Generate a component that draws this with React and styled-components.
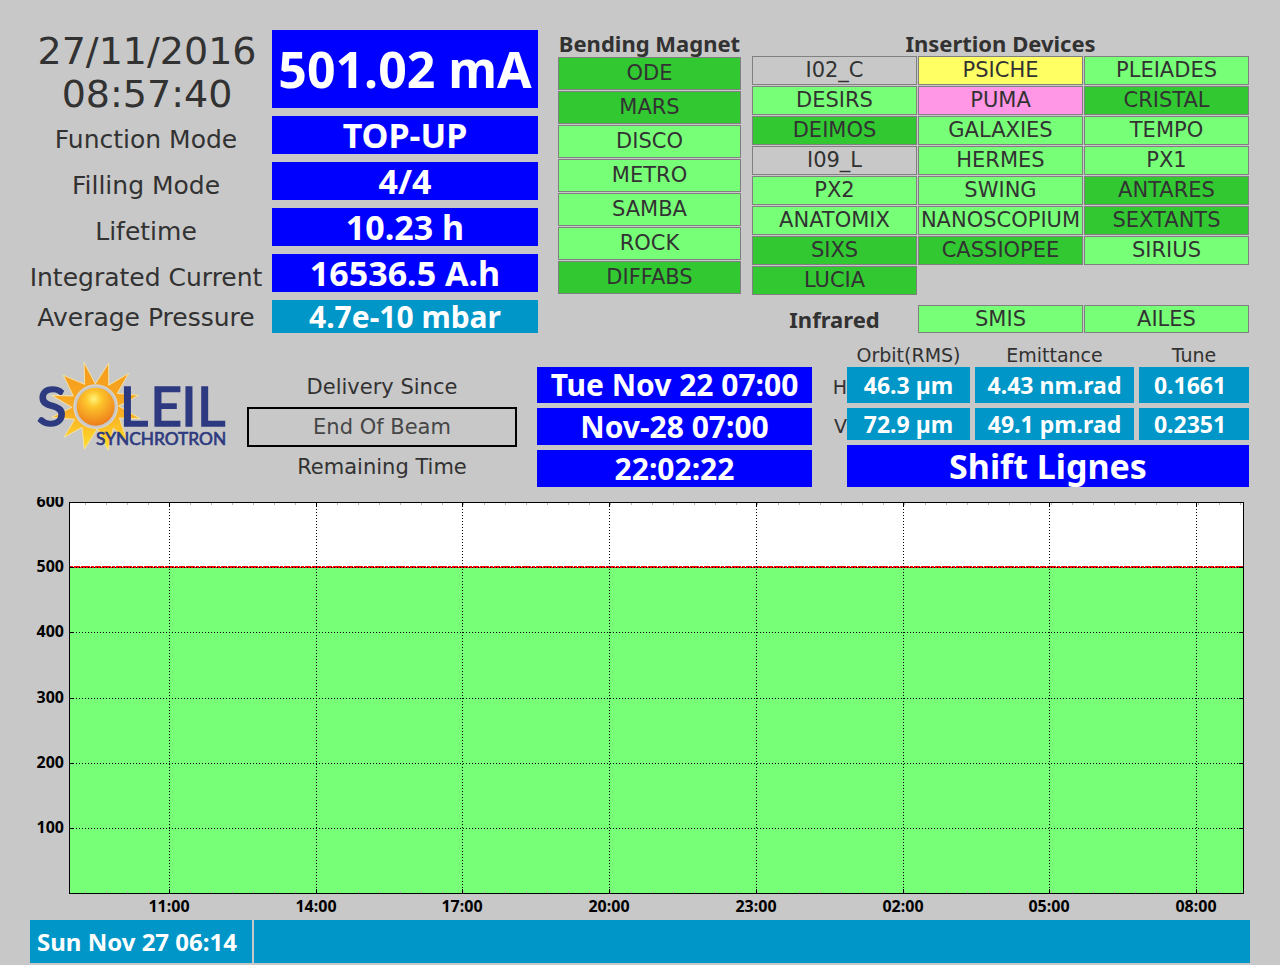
import styled, { createGlobalStyle } from 'styled-components'

const GlobalStyle = createGlobalStyle`
  * {
    box-sizing: border-box;
  }

  body {
    margin: 0;
    background: #c8c8c8;
    color: #323232;
    font-family: 'DejaVu Sans', sans-serif;
  }
`

const boldFont = "'Noto Sans', sans-serif"

const fills = {
  off: '#c8c8c8',
  open: '#78ff78',
  beam: '#32c832',
  warning: '#ffff64',
  fault: '#ff96e6',
}

const bendingMagnets = [
  ['ODE', 'beam'],
  ['MARS', 'beam'],
  ['DISCO', 'open'],
  ['METRO', 'open'],
  ['SAMBA', 'open'],
  ['ROCK', 'open'],
  ['DIFFABS', 'beam'],
]

const insertionDevices = [
  ['I02_C', 'off'],
  ['PSICHE', 'warning'],
  ['PLEIADES', 'open'],
  ['DESIRS', 'open'],
  ['PUMA', 'fault'],
  ['CRISTAL', 'beam'],
  ['DEIMOS', 'beam'],
  ['GALAXIES', 'open'],
  ['TEMPO', 'open'],
  ['I09_L', 'off'],
  ['HERMES', 'open'],
  ['PX1', 'open'],
  ['PX2', 'open'],
  ['SWING', 'open'],
  ['ANTARES', 'beam'],
  ['ANATOMIX', 'open'],
  ['NANOSCOPIUM', 'open'],
  ['SEXTANTS', 'beam'],
  ['SIXS', 'beam'],
  ['CASSIOPEE', 'beam'],
  ['SIRIUS', 'open'],
  ['LUCIA', 'beam'],
]

const Page = styled.main`
  padding: 30px 30px 2px;
`

const TopSection = styled.section`
  display: grid;
  grid-template-columns: 508fr 20px 183fr 11px 497fr;
  padding-right: 1px;
`

const Machine = styled.div`
  display: grid;
  grid-template-columns: minmax(0, 242fr) minmax(0, 266fr);
  grid-template-rows: 78px repeat(4, 38px) 33px;
  row-gap: 8px;
`

const Clock = styled.time`
  height: 78px;
  padding-right: 8px;
  font-size: 38px;
  line-height: 43px;
  text-align: center;
`

const MachineLabel = styled.div`
  display: flex;
  align-items: center;
  justify-content: center;
  padding: ${(p) => (p.$low ? '10px 10px 0 0' : '2px 10px 0 0')};
  font-size: 25px;
  line-height: 28px;
  white-space: nowrap;
`

const Value = styled.div`
  display: flex;
  align-items: center;
  justify-content: center;
  background: ${(p) => (p.$secondary ? '#0096c8' : '#0000ff')};
  color: #fff;
  font-family: ${boldFont};
  font-size: ${(p) => p.$size || 34}px;
  font-weight: 700;
  line-height: 1;
  white-space: nowrap;
`

const Group = styled.div`
  display: flex;
  flex-direction: column;
`

const GroupTitle = styled.h2`
  margin: 0;
  font-family: ${boldFont};
  font-size: 22px;
  font-weight: 700;
  line-height: ${(p) => p.$height}px;
  text-align: center;
  white-space: nowrap;
`

const Beamlines = styled.div`
  display: grid;
  grid-template-columns: repeat(${(p) => p.$columns}, 1fr);
  grid-auto-rows: ${(p) => p.$row}px;
  gap: 1px;
`

const Beamline = styled.div`
  display: flex;
  align-items: center;
  justify-content: center;
  min-width: 0;
  border: 1px solid #808080;
  background: ${(p) => fills[p.$state]};
  font-size: 21px;
  line-height: 1;
`

const Infrared = styled(Beamlines)`
  margin-top: 10px;
`

const MiddleSection = styled.section`
  display: grid;
  grid-template-columns: 217fr 270fr 20px 275fr 16px 421fr;
  margin-top: 12px;
  padding-right: 1px;
`

const Logo = styled.svg`
  display: block;
  width: 100%;
  margin-top: 5px;
`

const BeamLabels = styled.div`
  display: grid;
  grid-template-rows: 40px 40px 40px;
  padding-top: 22px;
`

const BeamLabel = styled.div`
  font-size: 21px;
  line-height: 40px;
  text-align: center;
`

const BeamButton = styled.button`
  border: 2px solid #000;
  background: transparent;
  color: #464646;
  font-family: inherit;
  font-size: 21px;
`

const BeamValues = styled.div`
  display: grid;
  grid-template-rows: 36px 37px 37px;
  row-gap: 5px;
  padding-top: 22px;
`

const Orbit = styled.div`
  display: grid;
  grid-template-rows: auto 42px;
  row-gap: 5px;
`

const OrbitTable = styled.table`
  display: block;

  thead {
    display: block;
  }

  tbody {
    display: grid;
    row-gap: 5px;
  }
`

const OrbitRow = styled.tr`
  display: grid;
  grid-template-columns: 14px 123fr 159fr 110fr;
  column-gap: 5px;
  height: ${(p) => p.$height}px;
`

const OrbitHead = styled.th`
  padding: 0;
  font-size: 19px;
  font-weight: 400;
  line-height: 20px;
  white-space: nowrap;
`

const OrbitAxis = styled.th`
  display: flex;
  align-items: center;
  justify-content: flex-end;
  margin-right: -5px;
  padding: 4px 0 0;
  font-size: 19px;
  font-weight: 400;
`

const OrbitValue = styled.td`
  display: flex;
  align-items: center;
  justify-content: center;
  padding: 0;
  background: #0096c8;
  color: #fff;
  font-family: ${boldFont};
  font-size: 23px;
  font-weight: 700;
  line-height: 1;
  white-space: nowrap;
`

const TuneValue = styled(OrbitValue)`
  padding-right: 8px;
`

const Shift = styled(Value)`
  margin-left: 19px;
`

const Chart = styled.svg`
  display: block;
  width: 100%;
  margin-top: 10px;

  text {
    fill: #000;
    font-family: ${boldFont};
    font-size: 16px;
    font-weight: 700;
  }
`

const Footer = styled.footer`
  display: grid;
  grid-template-columns: 222px 1fr;
  column-gap: 2px;
  height: 43px;
`

const Message = styled(Value)`
  justify-content: flex-start;
  padding-left: 7px;
`

const SoleilLogo = () => (
  <Logo viewBox="30 0 651 330" role="img" aria-label="SOLEIL Synchrotron">
    <defs>
      <radialGradient id="disc" cx="0.45" cy="0.3" r="0.7">
        <stop offset="0" stopColor="#fff27a" />
        <stop offset="0.3" stopColor="#fdc52c" />
        <stop offset="1" stopColor="#ee7d1b" />
      </radialGradient>
      <linearGradient id="rays" x1="0" y1="0" x2="0" y2="1">
        <stop offset="0" stopColor="#f59a1c" />
        <stop offset="0.55" stopColor="#f9ab22" />
        <stop offset="1" stopColor="#ffe02e" />
      </linearGradient>
    </defs>
    <path
      d="M192 37 L226 102 L266 40 L266 106 L326 70 L292 130 L356 136 L296 168 L361 206 L298 204 L322 275 L280 234 L264 301 L232 236 L193 298 L186 232 L132 262 L164 208 L95 202 L156 172 L95 136 L160 138 L130 76 L194 103 Z"
      fill="url(#rays)"
      stroke="#f6e2a0"
      strokeWidth="3"
    />
    <circle cx="227" cy="170" r="67" fill="#c8c8c8" />
    <circle cx="227" cy="170" r="65" fill="none" stroke="#eee0c4" strokeWidth="2" />
    <circle cx="227" cy="170" r="57" fill="url(#disc)" />
    <g fill="#2d3a80" stroke="#2d3a80" fontFamily="Lato, sans-serif">
      <text x="50 299 391 484 531" y="228" fontSize="165" strokeWidth="5">
        SLEIL
      </text>
      <text x="228" y="285" fontSize="52" strokeWidth="2">
        SYNCHROTRON
      </text>
    </g>
  </Logo>
)

const hours = [
  ['11:00', 139],
  ['14:00', 286],
  ['17:00', 432],
  ['20:00', 579],
  ['23:00', 726],
  ['02:00', 873],
  ['05:00', 1019],
  ['08:00', 1166],
]

const levels = [
  ['600', 5],
  ['500', 70],
  ['400', 135],
  ['300', 201],
  ['200', 266],
  ['100', 331],
]

const minorTicks = Array.from({ length: 56 }, (_, i) => 55 + i * 21).filter((x) => x < 1213)

const CurrentChart = () => (
  <Chart viewBox="0 0 1220 423" role="img" aria-label="Beam current over the last 24 hours">
    <rect x="39" y="5" width="1175" height="392" fill="#fff" />
    <rect x="39" y="70" width="1175" height="327" fill="#78ff78" />
    {minorTicks.map((x) => (
      <path key={x} d={`M${x + 0.5} 6 V8 M${x + 0.5} 394 V396`} stroke="#b4b4b4" />
    ))}
    <path d="M39 70 H1214" stroke="#ff0000" strokeWidth="2" />
    <path d="M39 69.5 H1214" stroke="#fff" strokeDasharray="1 3 1 6 1 9" />
    {levels.slice(1).map(([label, y]) => (
      <g key={label} stroke="#000">
        <path d={`M40 ${y + 0.5} H1213`} strokeDasharray="1 2" />
        <path d={`M40 ${y + 0.5} H44 M1209 ${y + 0.5} H1213`} />
      </g>
    ))}
    {hours.map(([label, x]) => (
      <g key={label} stroke="#000">
        <path d={`M${x + 0.5} 6 V396`} strokeDasharray="1 2" />
        <path d={`M${x + 0.5} 6 V10 M${x + 0.5} 392 V396`} />
      </g>
    ))}
    <rect x="39.5" y="5.5" width="1174" height="391" fill="none" stroke="#000" />
    {levels.map(([label, y]) => (
      <text key={label} x="34" y={y + 5} textAnchor="end">
        {label}
      </text>
    ))}
    {hours.map(([label, x]) => (
      <text key={label} x={x} y="415" textAnchor="middle">
        {label}
      </text>
    ))}
  </Chart>
)

const App = () => {
  return (
    <Page>
      <GlobalStyle />
      <TopSection>
        <Machine>
          <Clock>
            27/11/2016
            <br />
            08:57:40
          </Clock>
          <Value $size={50}>501.02 mA</Value>
          <MachineLabel $low>Function Mode</MachineLabel>
          <Value>TOP-UP</Value>
          <MachineLabel $low>Filling Mode</MachineLabel>
          <Value>4/4</Value>
          <MachineLabel $low>Lifetime</MachineLabel>
          <Value>10.23 h</Value>
          <MachineLabel $low>Integrated Current</MachineLabel>
          <Value>16536.5 A.h</Value>
          <MachineLabel>Average Pressure</MachineLabel>
          <Value $secondary $size={30}>4.7e-10 mbar</Value>
        </Machine>
        <div />
        <Group>
          <GroupTitle $height={27}>Bending Magnet</GroupTitle>
          <Beamlines $columns={1} $row={33}>
            {bendingMagnets.map(([name, state]) => (
              <Beamline key={name} $state={state}>{name}</Beamline>
            ))}
          </Beamlines>
        </Group>
        <div />
        <Group>
          <GroupTitle $height={26}>Insertion Devices</GroupTitle>
          <Beamlines $columns={3} $row={29}>
            {insertionDevices.map(([name, state]) => (
              <Beamline key={name} $state={state}>{name}</Beamline>
            ))}
          </Beamlines>
          <Infrared $columns={3} $row={28}>
            <GroupTitle $height={28}>Infrared</GroupTitle>
            <Beamline $state="open">SMIS</Beamline>
            <Beamline $state="open">AILES</Beamline>
          </Infrared>
        </Group>
      </TopSection>

      <MiddleSection>
        <SoleilLogo />
        <BeamLabels>
          <BeamLabel>Delivery Since</BeamLabel>
          <BeamButton type="button">End Of Beam</BeamButton>
          <BeamLabel>Remaining Time</BeamLabel>
        </BeamLabels>
        <div />
        <BeamValues>
          <Value $size={30}>Tue Nov 22 07:00</Value>
          <Value $size={30}>Nov-28 07:00</Value>
          <Value $size={30}>22:02:22</Value>
        </BeamValues>
        <div />
        <Orbit>
          <OrbitTable>
            <thead>
              <OrbitRow $height={22}>
                <td />
                <OrbitHead scope="col">Orbit(RMS)</OrbitHead>
                <OrbitHead scope="col">Emittance</OrbitHead>
                <OrbitHead scope="col">Tune</OrbitHead>
              </OrbitRow>
            </thead>
            <tbody>
              <OrbitRow $height={36}>
                <OrbitAxis scope="row">H</OrbitAxis>
                <OrbitValue>46.3 µm</OrbitValue>
                <OrbitValue>4.43 nm.rad</OrbitValue>
                <TuneValue>0.1661</TuneValue>
              </OrbitRow>
              <OrbitRow $height={32}>
                <OrbitAxis scope="row">V</OrbitAxis>
                <OrbitValue>72.9 µm</OrbitValue>
                <OrbitValue>49.1 pm.rad</OrbitValue>
                <TuneValue>0.2351</TuneValue>
              </OrbitRow>
            </tbody>
          </OrbitTable>
          <Shift>Shift Lignes</Shift>
        </Orbit>
      </MiddleSection>

      <CurrentChart />

      <Footer>
        <Message $secondary $size={24}>Sun Nov 27 06:14</Message>
        <Message $secondary />
      </Footer>
    </Page>
  )
}

export default App
